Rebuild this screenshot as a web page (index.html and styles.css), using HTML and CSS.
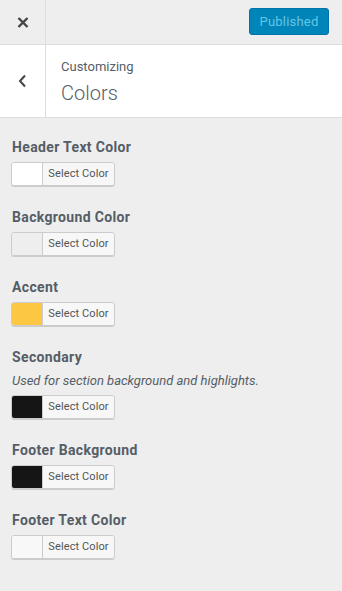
FILE: index.html
```html
<!DOCTYPE html>
<html>
<head>
<meta charset="utf-8">
<link rel="stylesheet" href="styles.css">
</head>
<body>
<div class="panel">
  <div class="topbar">
    <div class="close">
      <svg width="12" height="11" viewBox="0 0 12 11"><path d="M1.5 1 L10.5 10 M10.5 1 L1.5 10" stroke="#444" stroke-width="2.4" fill="none"/></svg>
    </div>
    <div class="publish-wrap">
      <div class="publish">Published</div>
    </div>
  </div>
  <div class="section-head">
    <div class="back">
      <svg width="9" height="14" viewBox="0 0 9 14"><path d="M7 1.5 L2 7 L7 12.5" stroke="#444" stroke-width="2" fill="none"/></svg>
    </div>
    <div class="titles">
      <div class="sub">Customizing</div>
      <div class="title">Colors</div>
    </div>
  </div>
  <div class="controls">
    <div class="control">
      <div class="label">Header Text Color</div>
      <div class="picker"><span class="swatch swatch-white"></span><span class="pick-text">Select Color</span></div>
    </div>
    <div class="control">
      <div class="label">Background Color</div>
      <div class="picker"><span class="swatch swatch-bg"></span><span class="pick-text">Select Color</span></div>
    </div>
    <div class="control">
      <div class="label">Accent</div>
      <div class="picker"><span class="swatch swatch-accent"></span><span class="pick-text">Select Color</span></div>
    </div>
    <div class="control">
      <div class="label">Secondary</div>
      <div class="desc">Used for section background and highlights.</div>
      <div class="picker"><span class="swatch swatch-dark"></span><span class="pick-text">Select Color</span></div>
    </div>
    <div class="control">
      <div class="label">Footer Background</div>
      <div class="picker"><span class="swatch swatch-dark"></span><span class="pick-text">Select Color</span></div>
    </div>
    <div class="control">
      <div class="label">Footer Text Color</div>
      <div class="picker"><span class="swatch swatch-light"></span><span class="pick-text">Select Color</span></div>
    </div>
  </div>
</div>
</body>
</html>
```
FILE: styles.css
```css
html, body {
  margin: 0;
  padding: 0;
  background: #eeeeee;
}
body {
  font-family: Roboto, "Liberation Sans", sans-serif;
  color: #555d66;
  width: 342px;
  height: 591px;
  overflow: hidden;
}
.topbar {
  display: flex;
  height: 44px;
  background: #eeeeee;
  border-bottom: 1px solid #dddddd;
}
.close {
  width: 45px;
  border-right: 1px solid #dddddd;
  display: flex;
  align-items: center;
  justify-content: center;
}
.publish-wrap {
  flex: 1;
  display: flex;
  justify-content: flex-end;
  align-items: flex-start;
  padding: 8px 13px 0 0;
}
.publish {
  width: 78px;
  height: 25px;
  border: 1px solid #0073aa;
  border-radius: 3px;
  background: #0085ba;
  color: #66c6e4;
  font-size: 13px;
  line-height: 25px;
  text-align: center;
  letter-spacing: 0.2px;
}
.section-head {
  display: flex;
  height: 72px;
  background: #ffffff;
  border-bottom: 1px solid #dddddd;
}
.back {
  width: 45px;
  border-right: 1px solid #dddddd;
  display: flex;
  align-items: center;
  justify-content: center;
}
.titles {
  padding: 12px 14px 0 15px;
}
.sub {
  font-size: 13px;
  line-height: 20px;
  color: #555d66;
}
.title {
  margin-top: 2px;
  font-size: 20px;
  line-height: 28px;
  font-weight: 300;
  color: #555d66;
}
.controls {
  padding: 19px 12px 0 11px;
}
.control {
  margin-bottom: 21px;
}
.label {
  font-size: 14px;
  line-height: 20px;
  font-weight: 700;
  color: #555d66;
  margin-bottom: 4px;
  padding-left: 1px;
  letter-spacing: 0.35px;
}
.desc {
  font-size: 13px;
  line-height: 20px;
  font-style: italic;
  color: #555d66;
  margin-bottom: 3px;
  padding-left: 1px;
}
.picker {
  margin-top: 1px;
  display: inline-flex;
  height: 22px;
  border: 1px solid #cccccc;
  border-radius: 3px;
  box-shadow: 0 1px 0 #cccccc;
  overflow: hidden;
  vertical-align: top;
}
.swatch {
  width: 30px;
  height: 22px;
}
.swatch-white { background: #ffffff; }
.swatch-bg { background: #eeeeee; }
.swatch-accent { background: #fcc742; }
.swatch-dark { background: #151515; }
.swatch-light { background: #f8f8f8; }
.pick-text {
  box-sizing: border-box;
  width: 72px;
  border-left: 1px solid #cccccc;
  background: #f7f7f7;
  color: #555555;
  font-size: 11px;
  line-height: 22px;
  white-space: nowrap;
  text-align: center;
  letter-spacing: 0.1px;
}
```
